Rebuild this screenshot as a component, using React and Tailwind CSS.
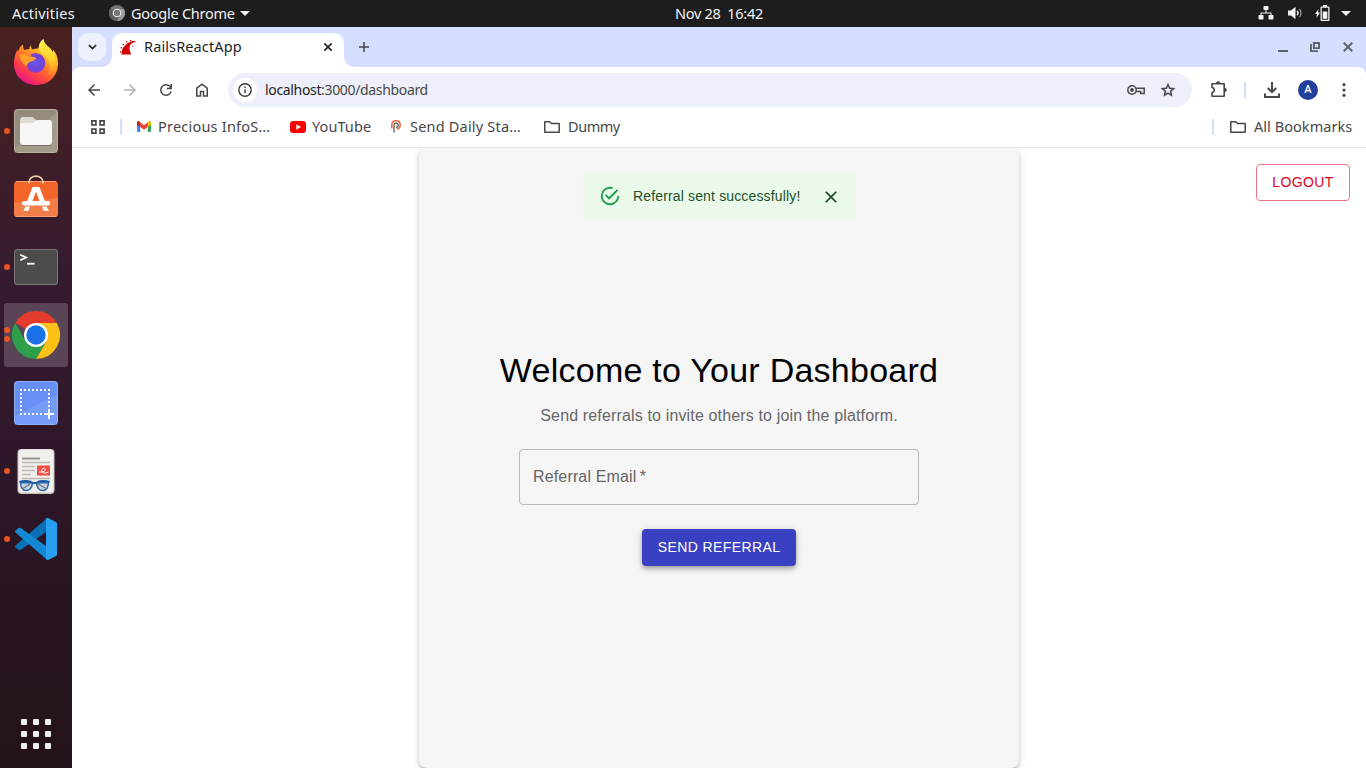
const ui = "font-['Noto_Sans','Open_Sans',sans-serif]";

function Indicator({ count = 1 }) {
  return (
    <div className="flex w-3.5 shrink-0 flex-col items-center gap-[3px]">
      {Array.from({ length: count }).map((_, i) => (
        <span key={i} className="block size-1.5 rounded-full bg-[#e95420]" />
      ))}
    </div>
  );
}

function DockItem({ dots = 0, active = false, children }) {
  return (
    <div className="flex h-[68px] w-[72px] items-center px-1">
      <div className={active ? "flex h-16 w-16 items-center rounded-[3px] bg-[#594556]" : "flex h-16 w-16 items-center"}>
        <div className={active ? "-mt-px -mr-2.5 -ml-1 w-3.5" : "-mr-2.5 -ml-1 w-3.5"}>
          <Indicator count={dots} />
        </div>
        <div className="h-16 w-16 shrink-0">{children}</div>
      </div>
    </div>
  );
}

function Firefox() {
  return (
    <svg viewBox="0 -4 64 64" className="size-16">
      <defs>
        <linearGradient id="ffBody" x1="0.8" y1="0.1" x2="0.25" y2="0.95">
          <stop offset="0" stopColor="#ffe23c" />
          <stop offset="0.3" stopColor="#ffb024" />
          <stop offset="0.55" stopColor="#ff6b2c" />
          <stop offset="0.8" stopColor="#fb3650" />
          <stop offset="1" stopColor="#e31587" />
        </linearGradient>
        <linearGradient id="ffTail" x1="0.5" y1="0" x2="0.5" y2="1">
          <stop offset="0" stopColor="#fff04e" />
          <stop offset="0.5" stopColor="#ffd52e" />
          <stop offset="1" stopColor="#ff8b25" stopOpacity="0.3" />
        </linearGradient>
        <radialGradient id="ffGlobe" cx="0.5" cy="0.45" r="0.6">
          <stop offset="0" stopColor="#6858e8" />
          <stop offset="0.7" stopColor="#7043d6" />
          <stop offset="1" stopColor="#a63bd0" />
        </radialGradient>
      </defs>
      <path d="M14 17c1-3.500 2.500-6 5-7.500c0 2.200.3 4 1.300 5.500c1.600-.7 3.200-1 4.700-.8c.3-1.600.8-2.800 1.700-4c.2 2 .8 3.300 2 4.300c1.500-.8 3.500-1.200 6-1c0-4 1.500-7.500 4.800-9.800c.3 4.500 3.500 6.500 6.500 9.300c1.500 1.500 2.300 3 2.700 4.700c.3-1.200.3-2.200.1-3.200c3.700 3.500 5.200 8.500 5.200 14C54 41.500 44.500 50 32 50S10 41 10 29c0-5.500 1-10 3.300-14.500c0 1 .2 1.800.7 2.500z" fill="url(#ffBody)" />
      <path d="M34.700 13.500c0-4 1.800-7.200 4.800-9.300c.3 4.500 3.500 6.500 6.500 9.300c5.500 6 7 15.500 2.500 23.500c-2 3.500-5 5-7 5c5-5 5.500-12 2-18c-2.500-4-7.500-5-8.800-10.500z" fill="url(#ffTail)" />
      <circle cx="31.700" cy="28.500" r="9.500" fill="url(#ffGlobe)" />
      <path d="M15 20c3-1.200 6.500-.8 9 .9c3 .2 6.500.8 8.500 2c-1.500 2.300-4 3.300-6 3.800c-2.500 1-3.500 2.500-3.500 4.500c-4-1.500-6-5.500-8-11.200z" fill="#ffa02a" />
      <path d="M26.500 20c1.500-1.500 4-2.300 7-1.500c5 1 7.500 5 7.500 10c-1.700-3.500-4.500-5.500-8.500-5.600c-2-1.200-4-1.800-6-2.900z" fill="#7140d8" />
    </svg>
  );
}

function Files() {
  return (
    <svg viewBox="0 0 64 64" className="size-16">
      <rect x="10" y="10" width="44" height="44" rx="4" fill="#b7af9f" />
      <rect x="11" y="11" width="42" height="42" rx="3.500" fill="#938c7b" />
      <path d="M11 49l42-36v36.500a3.500 3.500 0 0 1-3.500 3.500h-35a3.500 3.500 0 0 1-3.500-3.500z" fill="#a29b8a" />
      <path d="M16 21a3 3 0 0 1 3-3h9c2 0 2.500 3 4.500 3v8H16z" fill="#dedbd2" />
      <path d="M16.500 44a3 3 0 0 0 3 3h25.500a3 3 0 0 0 3-3z" fill="#77705f" />
      <path d="M16 25.500a1.700 1.700 0 0 1 1.700-1.500h10.800c2.300 0 2.700-3 5-3h12a2.500 2.500 0 0 1 2.500 2.500V43a3 3 0 0 1-3 3H19a3 3 0 0 1-3-3z" fill="#f8f7f6" />
    </svg>
  );
}

function Software() {
  return (
    <svg viewBox="0 0 64 64" className="size-16">
      <rect x="10" y="14" width="44" height="36" rx="3.500" fill="#f46529" />
      <path d="M10 36l44-5v15.500a3.500 3.500 0 0 1-3.500 3.500h-37a3.500 3.500 0 0 1-3.500-3.500z" fill="#f37d49" />
      <path d="M12 14.500h40M12 49.500h40" stroke="#f9a179" strokeWidth="1" />
      <path d="M25 16.500v-1.500a7 5.800 0 0 1 14 0V16.500" fill="none" stroke="#e8cfa0" strokeWidth="1.800" />
      <path fillRule="evenodd" d="M28.500 20h7l5.300 14H23.200zM32 24.500L28.500 34h7z" fill="#fff" />
      <rect x="18" y="34" width="28" height="4.500" rx="2.250" fill="#fff" />
      <path d="M21.500 39.500h4.500l-1.800 4.500h-4.700zM38 39.500h4.500l2.300 4.500h-4.900z" fill="#fff" />
    </svg>
  );
}

function Terminal() {
  return (
    <svg viewBox="0 0 64 64" className="size-16">
      <rect x="10" y="14" width="44" height="36" rx="3.500" fill="#777773" />
      <rect x="11" y="15" width="42" height="34" rx="2.500" fill="#4c4c4b" />
      <path d="M16.300 19.800l5.700 2.700l-5.700 2.700" fill="none" stroke="#fff" strokeWidth="1.800" />
      <path d="M23 28.700h7.500" stroke="#fff" strokeWidth="1.800" />
    </svg>
  );
}

function Chrome() {
  return (
    <svg viewBox="0 0 64 64" className="size-16">
      <path d="M32 32L11.200 20A24 24 0 0 1 52.800 20z" fill="#e33b2e" />
      <path d="M32 20H52.800A24 24 0 0 1 32 56L42.400 38z" fill="#fbc116" />
      <path d="M42.400 38L32 56A24 24 0 0 1 11.200 20L21.600 38L32 44z" fill="#2da04b" />
      <circle cx="32" cy="32" r="12" fill="#fff" />
      <circle cx="32" cy="32" r="9.700" fill="#1b72e8" />
    </svg>
  );
}

function Screenshot() {
  return (
    <svg viewBox="0 0 64 64" className="size-16">
      <rect x="10" y="10" width="44" height="44" rx="4" fill="#8fb0f8" />
      <rect x="11" y="11" width="42" height="42" rx="3.500" fill="#6690f6" />
      <path d="M11 45l42-22v26.500a3.500 3.500 0 0 1-3.500 3.500h-35a3.500 3.500 0 0 1-3.500-3.500z" fill="#759cf8" />
      <path d="M16 19h30M16 43h24" stroke="#fff" strokeWidth="2" strokeDasharray="2 2" />
      <path d="M17 22v20M45 22v14" stroke="#fff" strokeWidth="2" strokeDasharray="2 2" />
      <path d="M45 38v10M40 43h10" stroke="#fff" strokeWidth="2" />
    </svg>
  );
}

function Document() {
  return (
    <svg viewBox="0 0 64 64" className="size-16">
      <rect x="13.500" y="10" width="37" height="45" rx="4" fill="#c9c7c4" />
      <rect x="14.500" y="10.500" width="35" height="43" rx="3.500" fill="#f1f0ef" />
      <path d="M18 19.500h18" stroke="#9c9588" strokeWidth="2" />
      <path d="M18 23.500h28M18 27.500h13M18 31.500h13M18 35.500h9M18 39.500h28" stroke="#bdb8ac" strokeWidth="1.600" />
      <rect x="33" y="26.500" width="13" height="10" fill="#f04c41" />
      <path d="M35 33c3 .5 8-1 6-3.500c-2-1.500-4.500 2-2.500 4c1.500 1.200 4 .5 6-.5" fill="none" stroke="#fff" />
      <path d="M16.500 43.500c.3 6 2 8 5.500 8s6-3 6.500-7.500zM44.500 43.500c-.3 6-2 8-5.500 8s-6-3-6.500-7.500z" fill="#c8d3dd" stroke="#2b68b0" strokeWidth="1.500" />
      <path d="M15.500 43c4-1.500 10-1.300 12.500.5c1 .7 4 .7 5 0c2-1.800 8-2 12.500-.5" fill="none" stroke="#1d5aa8" strokeWidth="2" />
      <path d="M18 50l8-5M43 50l-9-5" stroke="#6e7780" strokeWidth="1.200" />
    </svg>
  );
}

function Code() {
  return (
    <svg viewBox="0 0 64 64" className="size-16">
      <path d="M11.500 38.500a1.300 1.300 0 0 0 0 2l3 2.500a2 2 0 0 0 2.200 0L42 25V12z" fill="#0a6fb5" />
      <path d="M11.500 25.500a1.300 1.300 0 0 1 0-2l3-2.500a2 2 0 0 1 2.200 0L42 39v13z" fill="#1389d3" />
      <path d="M42 11.500c1-.7 2-.5 3 0l7 3.400c.7.400 1 1 1 1.700v30.800c0 .7-.3 1.300-1 1.700l-7 3.400c-1 .5-2 .7-3 0z" fill="#27a0f0" />
    </svg>
  );
}

function Dock() {
  return (
    <aside className="flex w-[72px] shrink-0 flex-col justify-between bg-linear-to-b from-[#49211f] via-[#351a30] via-35% to-[#23121b] pt-0.5 pb-[19px]">
      <div>
        <DockItem><Firefox /></DockItem>
        <DockItem dots={1}><Files /></DockItem>
        <DockItem><Software /></DockItem>
        <DockItem dots={1}><Terminal /></DockItem>
        <DockItem dots={2} active><Chrome /></DockItem>
        <DockItem><Screenshot /></DockItem>
        <DockItem dots={1}><Document /></DockItem>
        <DockItem dots={1}><Code /></DockItem>
      </div>
      <div className="ml-[21px] grid w-[30px] grid-cols-3 gap-1.5">
        {Array.from({ length: 9 }).map((_, i) => (
          <span key={i} className="block size-1.5 rounded-[1px] bg-[#f0eeee]" />
        ))}
      </div>
    </aside>
  );
}

function TopBar() {
  return (
    <header className={`${ui} flex h-[27px] shrink-0 items-center bg-[#1d1d1d] pb-px text-[14.500px] leading-[26px] whitespace-nowrap text-[#f2f2f2]`}>
      <span className="ml-3 w-[97px] tracking-[0.25px]">Activities</span>
      <svg viewBox="0 0 16 16" className="size-4">
        <circle cx="8" cy="8" r="8" fill="#757575" />
        <path d="M8 8L1 4a8 8 0 0 0 6 12l4-6z" fill="#5e5e5e" />
        <path d="M8 4h7a8 8 0 0 1-7 12l4-6z" fill="#9b9b9b" />
        <circle cx="8" cy="8" r="4.300" fill="#f2f2f2" />
        <circle cx="8" cy="8" r="3.200" fill="#777" />
      </svg>
      <span className="ml-1.5 w-[109px] tracking-[-0.26px]">Google Chrome</span>
      <svg viewBox="0 0 10 5" className="h-[5px] w-2.5"><path d="M0 0h10L5 5z" fill="#f2f2f2" /></svg>
      <span className="ml-[425px] tracking-[-0.3px] whitespace-pre">Nov 28  16:42</span>
      <div className="mr-[15px] ml-auto flex items-center">
        <svg viewBox="0 0 16 14" className="h-3.5 w-4" fill="#f2f2f2">
          <rect x="5.500" y="0" width="5" height="4" rx="0.800" />
          <rect x="0.500" y="9" width="5" height="4.500" rx="0.800" />
          <rect x="10.500" y="9" width="5" height="4.500" rx="0.800" />
          <path d="M7.500 4h1v2.500H13.500V9h-1V7.500h-9V9h-1V6.500h5z" />
        </svg>
        <svg viewBox="0 0 16 14" className="ml-3.5 h-3.5 w-4" fill="none" stroke="#f2f2f2">
          <path d="M0 4.500h3L7.500.8v12.400L3 9.500H0z" fill="#f2f2f2" stroke="none" />
          <path d="M9 4.800c1.200 1.200 1.200 3.200 0 4.400" strokeWidth="1.300" />
          <path d="M11.500 2.800c2 2.300 2 6.100 0 8.400" strokeWidth="1.200" stroke="#a0a0a0" />
        </svg>
        <svg viewBox="0 0 15 16" className="ml-[11px] h-4 w-[15px]" fill="#f2f2f2">
          <path d="M3.500 4L0 9h2l-.5 4L5 7.500H3z" />
          <path fillRule="evenodd" d="M8 0h4v1.500h1.500a1 1 0 0 1 1 1V15a1 1 0 0 1-1 1h-7a1 1 0 0 1-1-1V2.500a1 1 0 0 1 1-1H8zM6.800 2.800v11.900h6.400V2.800z" />
          <path d="M7.700 6.500h4.600v7.300H7.700z" />
        </svg>
        <svg viewBox="0 0 10 5" className="ml-[11px] h-[5px] w-2.5"><path d="M0 0h10L5 5z" fill="#f2f2f2" /></svg>
      </div>
    </header>
  );
}

function M({ d, size = "size-5", box = "0 0 24 24", color = "#474747" }) {
  return <svg viewBox={box} className={`${size} shrink-0`}><path d={d} fill={color} /></svg>;
}

function Folder() {
  return (
    <svg viewBox="0 0 16 12" className="h-3 w-4 shrink-0" fill="none" stroke="#474747" strokeWidth="1.500" strokeLinejoin="round">
      <path d="M.8.800h5l1.700 1.700h7.700v8.700H.8z" />
    </svg>
  );
}

function TabStrip() {
  return (
    <div className="flex h-10 items-start bg-[#d5deff]">
      <div className="mt-1.5 ml-1.5 flex size-7 items-center justify-center rounded-[10px] bg-[#ecf0ff]">
        <svg viewBox="0 0 10 6" className="h-1.5 w-[9px]" fill="none" stroke="#1f1f1f" strokeWidth="1.800"><path d="M1 .8l4 4l4-4" /></svg>
      </div>
      <svg viewBox="0 0 10 10" className="mt-[30px] -ml-1 size-2.5"><path d="M10 0v10H0a10 10 0 0 0 10-10z" fill="#fff" /></svg>
      <div className="mt-1.5 flex h-[34px] w-[232px] items-center rounded-t-[10px] bg-white pb-1.5">
        <svg viewBox="0 0 16 15" className="ml-2 h-[15px] w-4" fill="#d30001">
          <path d="M1.500 14.500c0-3 .5-5.800 3-8.500C7.500 2.800 11 .5 15.500 1.200l-.2.900c-3 .3-5 2-5.600 4.500c-.5 2.500.3 5.500 1.500 7.900z" />
          <path d="M.2 11.200l1-.3v1.500l-1 .3zM1 7l1.200.6l-.5 1.100L.5 8zM3.200 3.500l1 1l-.8.9l-1-.9zM7 1l.7 1.200l-1 .5L6 1.600zM11 0l.4.900h-1.200L9.800 0zM12 6l1.300-.5l.2.800l-1.400.5z" />
        </svg>
        <span className="ml-2 w-[176px] text-[14.500px] tracking-[0.12px] text-[#1f1f1f]">RailsReactApp</span>
        <svg viewBox="0 0 8 8" className="ml-1 size-2" stroke="#1f1f1f" strokeWidth="1.600"><path d="M.3.300l7.400 7.400M7.700.3L.3 7.700" /></svg>
      </div>
      <svg viewBox="0 0 10 10" className="mt-[30px] size-2.5"><path d="M0 0v10h10A10 10 0 0 1 0 0z" fill="#fff" /></svg>
      <svg viewBox="0 0 10 10" className="mt-[15px] ml-[5px] size-2.5" stroke="#474747" strokeWidth="1.500"><path d="M5 0v10M0 5h10" /></svg>
      <div className="mt-[15px] mr-[13px] ml-auto flex items-center">
        <svg viewBox="0 0 10 10" className="size-2.5"><path d="M0 8h10v2H0z" fill="#5f6368" /></svg>
        <svg viewBox="0 0 10 10" className="ml-[22px] size-2.5" fill="none" stroke="#5f6368" strokeWidth="1.900"><path d="M3.900 1h5.100v5.100H3.900zM1 2v7.100h7" /></svg>
        <svg viewBox="0 0 10 10" className="ml-[23px] size-2.5" stroke="#5f6368" strokeWidth="2"><path d="M.8.800l8.400 8.400M9.200.8L.8 9.200" /></svg>
      </div>
    </div>
  );
}

function Toolbar() {
  return (
    <div className="bg-[#d5deff]">
      <div className="flex h-[43px] items-center rounded-t-[8px] bg-white pt-0.5">
        <div className="ml-3 flex gap-4">
          <M size="size-[18px] mx-px" d="M7.800 13l5.600 5.600L12 20l-8-8l8-8l1.400 1.400L7.800 11H20v2z" />
          <M size="size-[18px] mx-px" color="#b0b0b0" d="M16.200 13H4v-2h12.200l-5.600-5.600L12 4l8 8l-8 8l-1.400-1.400z" />
          <M size="size-[18px] mx-px" d="M12 20q-3.350 0-5.675-2.325T4 12t2.325-5.675T12 4q1.725 0 3.300.712T18 6.750V4h2v7h-7V9h4.200q-.8-1.400-2.187-2.200T12 6Q9.500 6 7.750 7.750T6 12t1.750 4.250T12 18q1.925 0 3.475-1.100T17.650 14h2.100q-.7 2.650-2.850 4.325T12 20" />
          <M size="size-[18px] mx-px" d="M6 19h3v-6h6v6h3v-9l-6-4.500L6 10zm-2 2V9l8-6l8 6v12h-7v-6h-2v6z" />
        </div>
        <div className="ml-4 flex h-[34px] w-[964px] items-center rounded-full bg-[#edf0fa] pr-[15px] pl-[5px]">
          <div className="flex size-6 items-center justify-center rounded-full bg-white">
            <svg viewBox="0 0 14 14" className="size-3.5" fill="none" stroke="#3c3c3c" strokeWidth="1.400"><circle cx="7" cy="7" r="6.200" /><path d="M7 6.200v4M7 3.500v1.500" /></svg>
          </div>
          <span className="ml-2 text-[14px] tracking-[-0.34px] text-[#474747]"><span className="text-[#1f1f1f]">localhost</span>:3000/dashboard</span>
          <svg viewBox="0 0 18 10" className="ml-auto h-2.5 w-[18px]" fill="none" stroke="#474747" strokeWidth="1.500">
            <circle cx="5" cy="5" r="4.200" />
            <circle cx="5" cy="5" r="1.900" fill="#474747" stroke="none" />
            <path d="M9.200 3.200H17.200v5.300h-3.500V6.500H9.200" />
          </svg>
          <M size="size-[18px] ml-3.5" d="M8.850 16.825l3.150-1.900l3.150 1.925l-.825-3.600l2.775-2.400l-3.650-.325l-1.450-3.400l-1.450 3.375l-3.650.325l2.775 2.425zM5.825 21l1.625-7.025L2 9.250l7.200-.625L12 2l2.800 6.625l7.200.625l-5.450 4.725L18.175 21L12 17.275z" />
        </div>
        <svg viewBox="0 0 18 18" className="-mt-px ml-[18px] size-[18px]" fill="none" stroke="#474747" strokeWidth="1.600" strokeLinejoin="round">
          <path d="M2 3.800h12.200v12.400H2v-3.700c3-.2 3-4.700 0-5z" />
          <path d="M6.300 3.500a1.900 1.900 0 0 1 3.800 0zM14.500 8a1.900 1.900 0 0 1 0 3.800z" fill="#474747" strokeWidth="0.800" />
        </svg>
        <div className="ml-4 h-4 w-0.5 bg-[#d3ddff]" />
        <svg viewBox="0 0 16 16" className="ml-[18px] size-4" fill="none" stroke="#474747" strokeWidth="2"><path d="M8 0v10M3.800 6L8 10.200L12.200 6M1 11.500V15h14v-3.500" /></svg>
        <div className="ml-[18px] flex size-5 items-center justify-center rounded-full bg-[#233f9c] pt-px font-['Roboto',sans-serif] text-[11px] leading-5 font-medium text-white">A</div>
        <svg viewBox="0 0 4 14" className="ml-[24px] h-3.5 w-1" fill="#474747"><circle cx="2" cy="1.700" r="1.600" /><circle cx="2" cy="7" r="1.600" /><circle cx="2" cy="12.300" r="1.600" /></svg>
      </div>
    </div>
  );
}

function Bookmarks() {
  return (
    <div className="flex h-[38px] items-center border-b border-[#e0e1e4] bg-white pb-1 text-[14.500px] whitespace-nowrap text-[#474747]">
      <svg viewBox="0 0 14 14" className="ml-[19px] mt-px size-3.5" fill="none" stroke="#474747" strokeWidth="1.700"><path d="M.9.900h4v4h-4zM9.100.9h4v4h-4zM.9 9.100h4v4h-4zM9.100 9.100h4v4h-4z" /></svg>
      <div className="ml-[15px] h-4 w-0.5 bg-[#d3ddff]" />
      <svg viewBox="0 0 14 11" className="ml-[15px] h-[11px] w-3.5">
        <path d="M0 1.800L3.200 4.200V11H1a1 1 0 0 1-1-1z" fill="#4285f4" />
        <path d="M14 1.800L10.800 4.200V11H13a1 1 0 0 0 1-1z" fill="#34a853" />
        <path d="M10.800 1.200l1-.8C12.800-.3 14 .3 14 1.600V3.500l-3.200 2.400z" fill="#fbbc04" />
        <path d="M3.200 1.200L7 4.200l3.800-3v4.700L7 8.800L3.200 5.900z" fill="#ea4335" />
        <path d="M0 1.600C0 .3 1.200-.3 2.200.4l1 .8v4.700L0 3.500z" fill="#c5221f" />
      </svg>
      <span className="ml-[7px] w-[132px] tracking-[0.22px]">Precious InfoS…</span>
      <svg viewBox="0 0 16 12" className="h-3 w-4"><rect width="16" height="12" rx="3" fill="#f00" /><path d="M6.300 3.300v5.400L11 6z" fill="#fff" /></svg>
      <span className="ml-1.5 w-[79px] tracking-[0.08px]">YouTube</span>
      <svg viewBox="0 0 10 13" className="h-[13px] w-2.5" fill="none">
        <path d="M.8 8.500V5a4.200 4.200 0 1 1 5 4.100" stroke="#e8663a" strokeWidth="1.500" />
        <path d="M3 12.500V5.200a2.100 2.100 0 1 1 2.100 2.100" stroke="#5a5a5a" strokeWidth="1.300" />
      </svg>
      <span className="ml-[9px] w-[134px] tracking-[0.2px]">Send Daily Sta…</span>
      <Folder />
      <span className="ml-2 tracking-[-0.45px]">Dummy</span>
      <div className="mr-[14px] ml-auto flex items-center">
        <div className="h-4 w-0.5 bg-[#d3ddff]" />
        <div className="ml-4"><Folder /></div>
        <span className="ml-2 w-[98px] tracking-[0.05px]">All Bookmarks</span>
      </div>
    </div>
  );
}

function Page() {
  return (
    <main className="relative flex min-h-0 flex-1 justify-center overflow-hidden bg-white font-['Liberation_Sans',Arial,sans-serif]">
      <section className="flex h-[620px] w-[600px] flex-col items-center rounded-[8px] bg-[#f5f5f5] pt-6 shadow-[0_3px_3px_-2px_rgba(0,0,0,0.2),0_3px_4px_0_rgba(0,0,0,0.14),0_1px_8px_0_rgba(0,0,0,0.12)]">
        <div className="flex h-12 w-[272px] items-center rounded-[4px] bg-[#ebf9eb] px-4 text-[#1b5129]">
          <M size="size-[22px]" color="#1f9d4d" d="M20,12A8,8 0 0,1 12,20A8,8 0 0,1 4,12A8,8 0 0,1 12,4C12.760,4 13.500,4.110 14.200,4.310L15.770,2.740C14.610,2.260 13.340,2 12,2A10,10 0 0,0 2,12A10,10 0 0,0 12,22A10,10 0 0,0 22,12M7.910,10.080L6.500,11.500L11,16L21,6L19.590,4.580L11,13.170L7.910,10.080Z" />
          <span className="ml-3 text-[14px] leading-5 tracking-[0.01071em] whitespace-nowrap">Referral sent successfully!</span>
          <M size="size-5 ml-auto -mr-0.5 mt-0.5" color="#174a25" d="M19 6.410L17.590 5L12 10.590L6.410 5L5 6.410L10.590 12L5 17.590L6.410 19L12 13.410L17.590 19L19 17.590L13.410 12z" />
        </div>
        <h1 className="mt-[129px] text-[34px] leading-[42px] tracking-[0.00735em] text-black">Welcome to Your Dashboard</h1>
        <p className="mt-[13px] text-base leading-6 tracking-[0.00938em] text-[#666]">Send referrals to invite others to join the platform.</p>
        <div className="mt-[21px] flex h-14 w-[400px] items-center rounded-[4px] border border-[#b9b9b9] px-[13px] text-base tracking-[0.00938em] text-[#666]">
          <span>Referral Email&#8201;*</span>
        </div>
        <button className="mt-6 flex h-[37px] w-[154px] items-center justify-center rounded-[4px] bg-[#3a40c2] text-[14px] tracking-[0.02857em] text-white shadow-[0_2px_4px_-1px_rgba(0,0,0,0.2),0_4px_5px_0_rgba(0,0,0,0.14),0_1px_10px_0_rgba(0,0,0,0.12)]">SEND REFERRAL</button>
      </section>
      <button className="absolute top-4 right-4 flex h-[37px] w-[94px] items-center justify-center rounded-[4px] border border-[#ee7480] text-[14px] tracking-[0.02857em] text-[#e0001b]">LOGOUT</button>
    </main>
  );
}

export default function App() {
  return (
    <div className="flex h-[768px] w-[1366px] flex-col overflow-hidden">
      <TopBar />
      <div className="flex min-h-0 flex-1">
        <Dock />
        <div className="flex min-w-0 flex-1 flex-col">
          <div className={ui}>
            <TabStrip />
            <Toolbar />
            <Bookmarks />
          </div>
          <Page />
        </div>
      </div>
    </div>
  );
}
